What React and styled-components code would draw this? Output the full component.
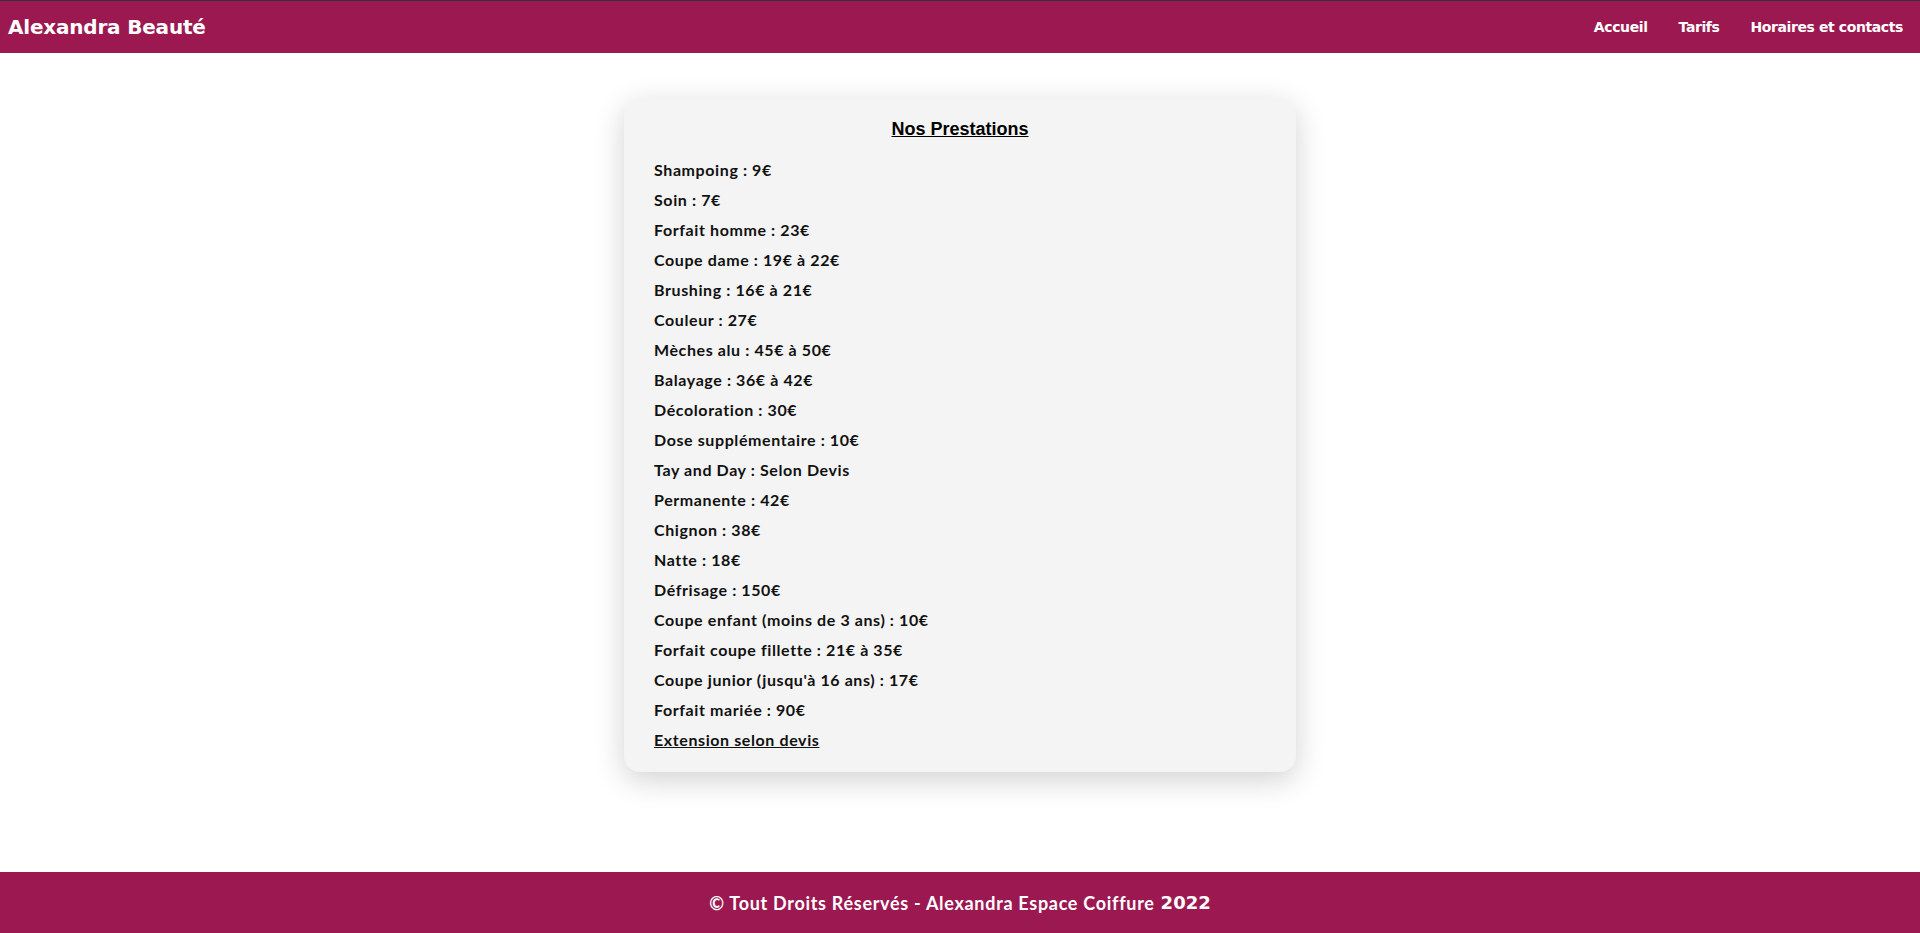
import React from "react";
import styled, { createGlobalStyle } from "styled-components";

const GlobalStyle = createGlobalStyle`
  html, body {
    margin: 0;
    padding: 0;
    background: #ffffff;
  }
  body {
    font-family: "Lato", "Noto Sans", sans-serif;
  }
  #root {
    min-height: 100vh;
  }
`;

const Page = styled.div`
  min-height: 100vh;
  display: flex;
  flex-direction: column;
`;

const Header = styled.header`
  height: 52px;
  background: #9b1850;
  border-top: 1px solid #333340;
  display: flex;
  align-items: center;
  justify-content: space-between;
  padding: 0 17px 0 8px;
`;

const Brand = styled.h1`
  margin: 0;
  color: #ffffff;
  font-family: "DejaVu Sans", Verdana, sans-serif;
  font-size: 20px;
  font-weight: 700;
  letter-spacing: -0.2px;
`;

const Nav = styled.nav`
  display: flex;
  gap: 31px;
`;

const NavLink = styled.a`
  color: #ffffff;
  text-decoration: none;
  font-family: "DejaVu Sans", Verdana, sans-serif;
  font-size: 14px;
  font-weight: 700;
  letter-spacing: -0.4px;
`;

const Main = styled.main`
  flex: 1;
  display: flex;
  justify-content: center;
  padding: 45px 0 100px;
`;

const Card = styled.section`
  width: 672px;
  box-sizing: border-box;
  background: #f4f4f4;
  border-radius: 16px;
  box-shadow: 0 8px 30px rgba(0, 0, 0, 0.18);
  padding: 21px 30px 15px;
`;

const Title = styled.h2`
  margin: 0 0 15px;
  text-align: center;
  font-family: "Liberation Sans", Arial, sans-serif;
  font-size: 18px;
  font-weight: 700;
  text-decoration: underline;
  color: #000;
`;

const List = styled.ul`
  list-style: none;
  margin: 0;
  padding: 0;
`;

const Item = styled.li`
  height: 30px;
  line-height: 30px;
  font-size: 16px;
  font-weight: 700;
  letter-spacing: 0.6px;
  color: #111;
  text-decoration: ${(p) => (p.$underline ? "underline" : "none")};
`;

const Footer = styled.footer`
  height: 61px;
  background: #9b1850;
  display: flex;
  align-items: center;
  justify-content: center;
  color: #ffffff;
  font-size: 18px;
  font-weight: 700;
  letter-spacing: 0.7px;
`;

const Year = styled.span`
  font-family: "DejaVu Sans", Verdana, sans-serif;
  letter-spacing: 0;
  margin-left: 6px;
`;

const prestations = [
  "Shampoing : 9€",
  "Soin : 7€",
  "Forfait homme : 23€",
  "Coupe dame : 19€ à 22€",
  "Brushing : 16€ à 21€",
  "Couleur : 27€",
  "Mèches alu : 45€ à 50€",
  "Balayage : 36€ à 42€",
  "Décoloration : 30€",
  "Dose supplémentaire : 10€",
  "Tay and Day : Selon Devis",
  "Permanente : 42€",
  "Chignon : 38€",
  "Natte : 18€",
  "Défrisage : 150€",
  "Coupe enfant (moins de 3 ans) : 10€",
  "Forfait coupe fillette : 21€ à 35€",
  "Coupe junior (jusqu'à 16 ans) : 17€",
  "Forfait mariée : 90€",
];

export default function App() {
  return (
    <Page>
      <GlobalStyle />
      <Header>
        <Brand>Alexandra Beauté</Brand>
        <Nav>
          <NavLink href="#">Accueil</NavLink>
          <NavLink href="#">Tarifs</NavLink>
          <NavLink href="#">Horaires et contacts</NavLink>
        </Nav>
      </Header>
      <Main>
        <Card>
          <Title>Nos Prestations</Title>
          <List>
            {prestations.map((p) => (
              <Item key={p}>{p}</Item>
            ))}
            <Item $underline>Extension selon devis</Item>
          </List>
        </Card>
      </Main>
      <Footer>
        © Tout Droits Réservés - Alexandra Espace Coiffure<Year>2022</Year>
      </Footer>
    </Page>
  );
}
